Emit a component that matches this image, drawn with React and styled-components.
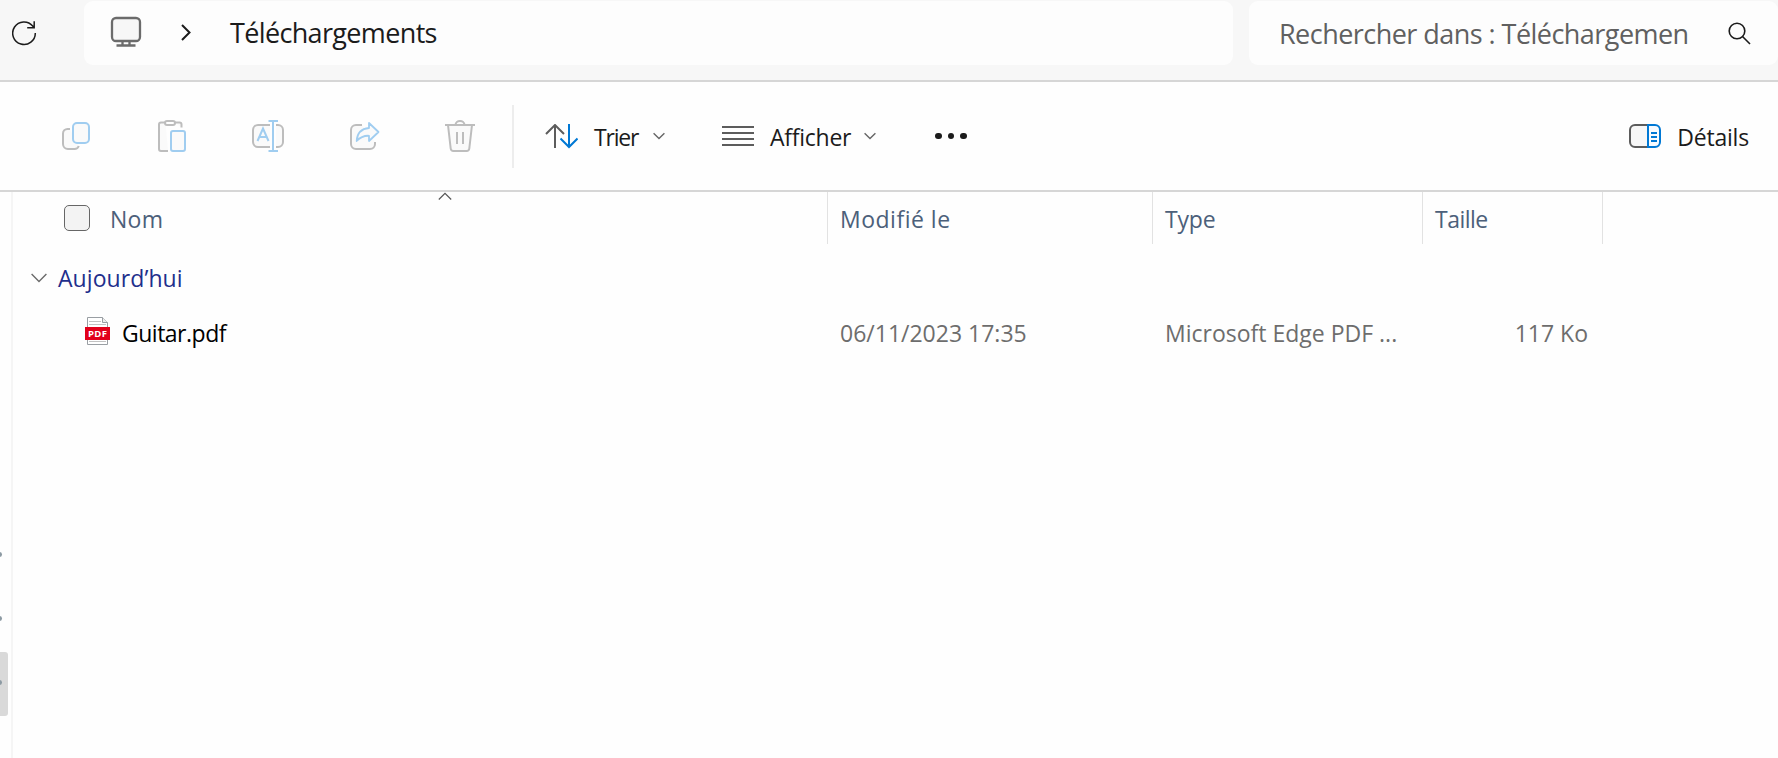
import React from "react";
import styled, { createGlobalStyle } from "styled-components";

const Global = createGlobalStyle`
  * { box-sizing: border-box; }
  body {
    margin: 0;
    background: #fefefe;
    font-family: "Open Sans", "Noto Sans", sans-serif;
    font-size: 23px;
    color: #1b1b1b;
    overflow: hidden;
  }
`;

const Window = styled.div`
  width: 1778px;
  height: 758px;
  display: flex;
  flex-direction: column;
  overflow: hidden;
`;

const Text = styled.span`
  line-height: 32px;
  white-space: nowrap;
  letter-spacing: ${(p) => p.$track || 0}px;
`;

const Icon = styled.svg`
  display: block;
  flex: none;
  fill: none;
`;

/* Address bar */
const AddressBar = styled.header`
  flex: none;
  height: 82px;
  padding: 1px 0 0 12px;
  display: flex;
  align-items: flex-start;
  background: #f7f7f7;
  border-bottom: 2px solid #d6d6d6;
`;

const RefreshButton = styled.div`
  width: 72px;
  height: 64px;
  display: flex;
  align-items: center;
`;

const Field = styled.div`
  height: 64px;
  display: flex;
  align-items: center;
  background: #fdfdfd;
  border-radius: 9px;
  font-size: 27px;
`;

const PathField = styled(Field)`
  width: 1149px;
  padding: 0 0 2px 26px;
  ${Text} { padding-top: 2px; }
`;

const PathChevron = styled(Icon)`
  margin: 1px 39px 0 39px;
`;

const SearchField = styled(Field)`
  width: 529px;
  margin-left: 16px;
  padding: 0 27px 0 30px;
  justify-content: space-between;
  color: #606060;
`;

const SearchText = styled(Text)`
  width: 410px;
  padding-top: 2px;
  overflow: hidden;
  line-height: 40px;
`;

/* Command bar */
const CommandBar = styled.nav`
  flex: none;
  height: 110px;
  display: flex;
  align-items: center;
  border-bottom: 2px solid #d6d6d6;
`;

const IconActions = styled.div`
  display: flex;
  gap: 63px;
  padding-left: 60px;
`;

const Divider = styled.div`
  width: 2px;
  height: 63px;
  margin: 0 31px 0 36px;
  background: #ededed;
`;

const MenuButton = styled.div`
  display: flex;
  align-items: center;
  width: ${(p) => p.$width}px;
  & + & { margin-left: 57px; }
  ${Text} { padding-top: 2px; margin-left: 16px; flex: 1; }
`;

const MoreButton = styled.div`
  display: flex;
  gap: 6px;
  margin-left: 59px;
`;

const Dot = styled.i`
  width: 6.5px;
  height: 6.5px;
  border-radius: 50%;
  background: #1b1b1b;
`;

const DetailsButton = styled.div`
  display: flex;
  align-items: center;
  gap: 15px;
  margin-left: auto;
  padding-right: 29px;
  ${Text} { padding-top: 2px; }
`;

/* Content */
const Body = styled.main`
  flex: 1;
  display: flex;
  min-height: 0;
`;

const TreeEdge = styled.aside`
  flex: none;
  width: 13px;
  padding-top: 332px;
  border-right: 2px solid #f5f5f5;
`;

const TreeItem = styled.div`
  width: 8px;
  height: 64px;
  padding-bottom: 4px;
  display: flex;
  align-items: center;
  overflow: hidden;
  border-radius: 0 3px 3px 0;
  background: ${(p) => (p.$selected ? "#d9d9d9" : "transparent")};
`;

const Pin = styled.i`
  width: 5px;
  height: 5px;
  margin-left: -3px;
  border-radius: 50%;
  background: #8c9aa3;
`;

const List = styled.section`
  flex: 1;
`;

const Row = styled.div`
  display: grid;
  grid-template-columns: 815px 325px 270px 180px;
`;

const HeaderRow = styled(Row)`
  height: 52px;
  color: #4c607a;
`;

const HeaderCell = styled.div`
  display: flex;
  align-items: center;
  position: relative;
  padding: 2px 0 0 ${(p) => p.$pad || 12}px;
  border-right: 1px solid #e2e2e2;
`;

const SortMark = styled(Icon)`
  position: absolute;
  left: 425px;
  top: 0;
`;

const Checkbox = styled.div`
  width: 26px;
  height: 26px;
  margin: -2px 20px 0 0;
  border: 1.5px solid #666;
  border-radius: 5px;
  background: #f3f3f3;
`;

const GroupRow = styled.div`
  height: 54px;
  margin-top: 7px;
  padding-left: 18px;
  display: flex;
  align-items: center;
  gap: 11px;
  color: #1e2f8c;
`;

const FileRow = styled(Row)`
  height: 56px;
  align-items: center;
  color: #6d6d6d;
`;

const NameCell = styled.div`
  display: flex;
  align-items: center;
  gap: 12px;
  padding-left: 72px;
  color: #000;
`;

const Cell = styled.div`
  display: flex;
  padding-left: 12px;
`;

const SizeCell = styled(Cell)`
  justify-content: flex-end;
  padding: 0 15px 0 0;
`;

const FileIcon = styled.svg`
  display: block;
  flex: none;
  margin-top: -4px;
  font: 700 9.5px "Open Sans", sans-serif;
`;

const GREY = "#bdbdbd";
const BLUE = "#a0cdf0";

const Chevron = () => (
  <Icon width="12" height="8" viewBox="0 0 12 8" stroke="#666" strokeWidth="1.4">
    <path d="M.6 1.2 6 6.6l5.4-5.4" />
  </Icon>
);

const CopyIcon = () => (
  <Icon width="34" height="32" viewBox="60 120 34 32" strokeWidth="2">
    <path stroke={GREY} fill="#fafafa" d="M70 129h-2.5a4.500 4.500 0 0 0-4.500 4.500V144a5 5 0 0 0 5 5h6.500a4.500 4.500 0 0 0 4.300-3" />
    <rect stroke={BLUE} fill="#fafafa" x="73" y="123" width="16" height="20" rx="4" />
  </Icon>
);

const PasteIcon = () => (
  <Icon width="31" height="32" viewBox="157 120 31 32" strokeWidth="2">
    <path stroke={GREY} fill="#fafafa" d="M168 151h-7a2 2 0 0 1-2-2v-24.500a2 2 0 0 1 2-2h4.500M175 122.500h4.500a2 2 0 0 1 2 2v3" />
    <rect stroke={GREY} fill="#fff" x="165" y="121" width="10" height="4" rx="2" />
    <rect stroke={BLUE} fill="#fafafa" x="171" y="131" width="14" height="20" rx="2" />
  </Icon>
);

const RenameIcon = () => (
  <Icon width="35" height="32" viewBox="251 120 35 32" strokeWidth="2">
    <path stroke={GREY} fill="#fafafa" d="M270 125h-12a5 5 0 0 0-5 5v12a5 5 0 0 0 5 5h12M276 125h2a5 5 0 0 1 5 5v12a5 5 0 0 1-5 5h-2" />
    <path stroke={BLUE} d="M268.500 121h9.500M268.500 151h9.500M273 121v30M257.500 141l5.500-12.500 5.500 12.500M259.500 137h7" />
  </Icon>
);

const ShareIcon = () => (
  <Icon width="32" height="32" viewBox="349 120 32 32" strokeWidth="2">
    <path stroke={GREY} fill="#fafafa" d="M362 125h-6a5 5 0 0 0-5 5v14a5 5 0 0 0 5 5h14a5 5 0 0 0 5-5v-2" />
    <path stroke={BLUE} fill="#fafafa" strokeWidth="1.8" strokeLinejoin="round" d="M369 123l9.500 9-9.500 9v-5.200c-5-.3-8.500 1.200-12.300 5.200.4-7.500 4.300-12.300 12.300-13z" />
  </Icon>
);

const TrashIcon = () => (
  <Icon width="32" height="32" viewBox="444 120 32 32" stroke={GREY} strokeWidth="2">
    <path fill="#fafafa" d="M448 125l2.700 23.500a2.800 2.800 0 0 0 2.800 2.500h13a2.800 2.800 0 0 0 2.800-2.500L472 125" />
    <path d="M445 125h30M455.500 125c0-5.300 9-5.300 9 0M457 132v12M463 132v12" />
  </Icon>
);

export default function App() {
  return (
    <Window>
      <Global />
      <AddressBar>
        <RefreshButton>
          <Icon width="25" height="26" viewBox="0 0 25 26" stroke="#1b1b1b" strokeWidth="1.5">
            <path d="M23.300 13A11.300 11.300 0 1 1 20.700 6L22 7.700M22.200 1.200v6.600H15.200" />
          </Icon>
        </RefreshButton>
        <PathField>
          <Icon width="32" height="32" viewBox="0 0 32 32" stroke="#6b6b6b" strokeWidth="2.3">
            <rect x="2" y="2" width="28" height="23" rx="4" fill="#f7f7f7" />
            <path d="M12.500 25v4M19.500 25v4M6.500 29.500h19" />
          </Icon>
          <PathChevron width="10" height="17" viewBox="0 0 10 17" stroke="#1b1b1b" strokeWidth="2">
            <path d="M1 1l7.500 7.500L1 16" />
          </PathChevron>
          <Text $track={-0.65}>Téléchargements</Text>
        </PathField>
        <SearchField>
          <SearchText $track={-0.54}>Rechercher dans : Téléchargemen</SearchText>
          <Icon width="23" height="23" viewBox="0 0 23 23" stroke="#1b1b1b" strokeWidth="1.6">
            <circle cx="9" cy="9" r="7.8" />
            <path d="M14.500 14.500l7.500 7.500" />
          </Icon>
        </SearchField>
      </AddressBar>

      <CommandBar>
        <IconActions>
          <CopyIcon />
          <PasteIcon />
          <RenameIcon />
          <ShareIcon />
          <TrashIcon />
        </IconActions>
        <Divider />
        <MenuButton $width={120}>
          <Icon width="33" height="25" viewBox="0 0 33 25" strokeWidth="2">
            <path stroke="#5c5c5c" d="M10 24V1M1 10l9-9 9 9" />
            <path stroke="#0078d4" d="M24 0v23M15.500 14.500l8.500 8.500 8.500-8.500" />
          </Icon>
          <Text $track={-1.2}>Trier</Text>
          <Chevron />
        </MenuButton>
        <MenuButton $width={154}>
          <Icon width="32" height="20" viewBox="0 0 32 20" stroke="#5c5c5c" strokeWidth="2">
            <path d="M0 1h32M0 7h32M0 13h32M0 19h32" />
          </Icon>
          <Text $track={-0.25}>Afficher</Text>
          <Chevron />
        </MenuButton>
        <MoreButton><Dot /><Dot /><Dot /></MoreButton>
        <DetailsButton>
          <Icon width="33" height="24" viewBox="0 0 33 24" strokeWidth="2">
            <path stroke="#5c5c5c" fill="#f7f7f7" d="M20 1H6a5 5 0 0 0-5 5v12a5 5 0 0 0 5 5h14" />
            <path stroke="#0078d4" fill="#f7fbff" d="M19 1h7a5 5 0 0 1 5 5v12a5 5 0 0 1-5 5h-7z" />
            <path stroke="#0078d4" d="M22 9h6M22 13h6M22 17h6" />
          </Icon>
          <Text $track={-0.2}>Détails</Text>
        </DetailsButton>
      </CommandBar>

      <Body>
        <TreeEdge>
          <TreeItem><Pin /></TreeItem>
          <TreeItem><Pin /></TreeItem>
          <TreeItem $selected><Pin /></TreeItem>
        </TreeEdge>
        <List>
          <HeaderRow>
            <HeaderCell $pad={51}>
              <SortMark width="14" height="9" viewBox="0 0 14 9" stroke="#555" strokeWidth="1.2">
                <path d="M.8 7.500 7 1.300l6.200 6.200" />
              </SortMark>
              <Checkbox />
              <Text $track={0.3}>Nom</Text>
            </HeaderCell>
            <HeaderCell><Text $track={0.5}>Modifié le</Text></HeaderCell>
            <HeaderCell><Text $track={-0.2}>Type</Text></HeaderCell>
            <HeaderCell><Text $track={-0.5}>Taille</Text></HeaderCell>
          </HeaderRow>
          <GroupRow>
            <Icon width="16" height="10" viewBox="0 0 16 10" stroke="#6a6a6a" strokeWidth="1.4">
              <path d="M.6 1 8 8.400 15.400 1" />
            </Icon>
            <Text $track={0.08}>Aujourd’hui</Text>
          </GroupRow>
          <FileRow>
            <NameCell>
              <FileIcon width="25" height="28" viewBox="0 0 25 28">
                <path d="M2.500.5H17.500L22.500 5.500V27.500H2.500z" fill="#fff" stroke="#999ea3" />
                <path d="M17.500.5V5.500H22.500" fill="#eee" stroke="#999ea3" />
                <path d="M4 4.500H16M4 7.500H21M4 24.500H21" stroke="#c2c2c2" />
                <rect y="10" width="25" height="13" fill="#e2001a" />
                <text x="3" y="20" fill="#fff" textLength="19">PDF</text>
              </FileIcon>
              <Text $track={-0.5}>Guitar.pdf</Text>
            </NameCell>
            <Cell><Text>06/11/2023 17:35</Text></Cell>
            <Cell><Text>Microsoft Edge PDF ...</Text></Cell>
            <SizeCell><Text>117 Ko</Text></SizeCell>
          </FileRow>
        </List>
      </Body>
    </Window>
  );
}
